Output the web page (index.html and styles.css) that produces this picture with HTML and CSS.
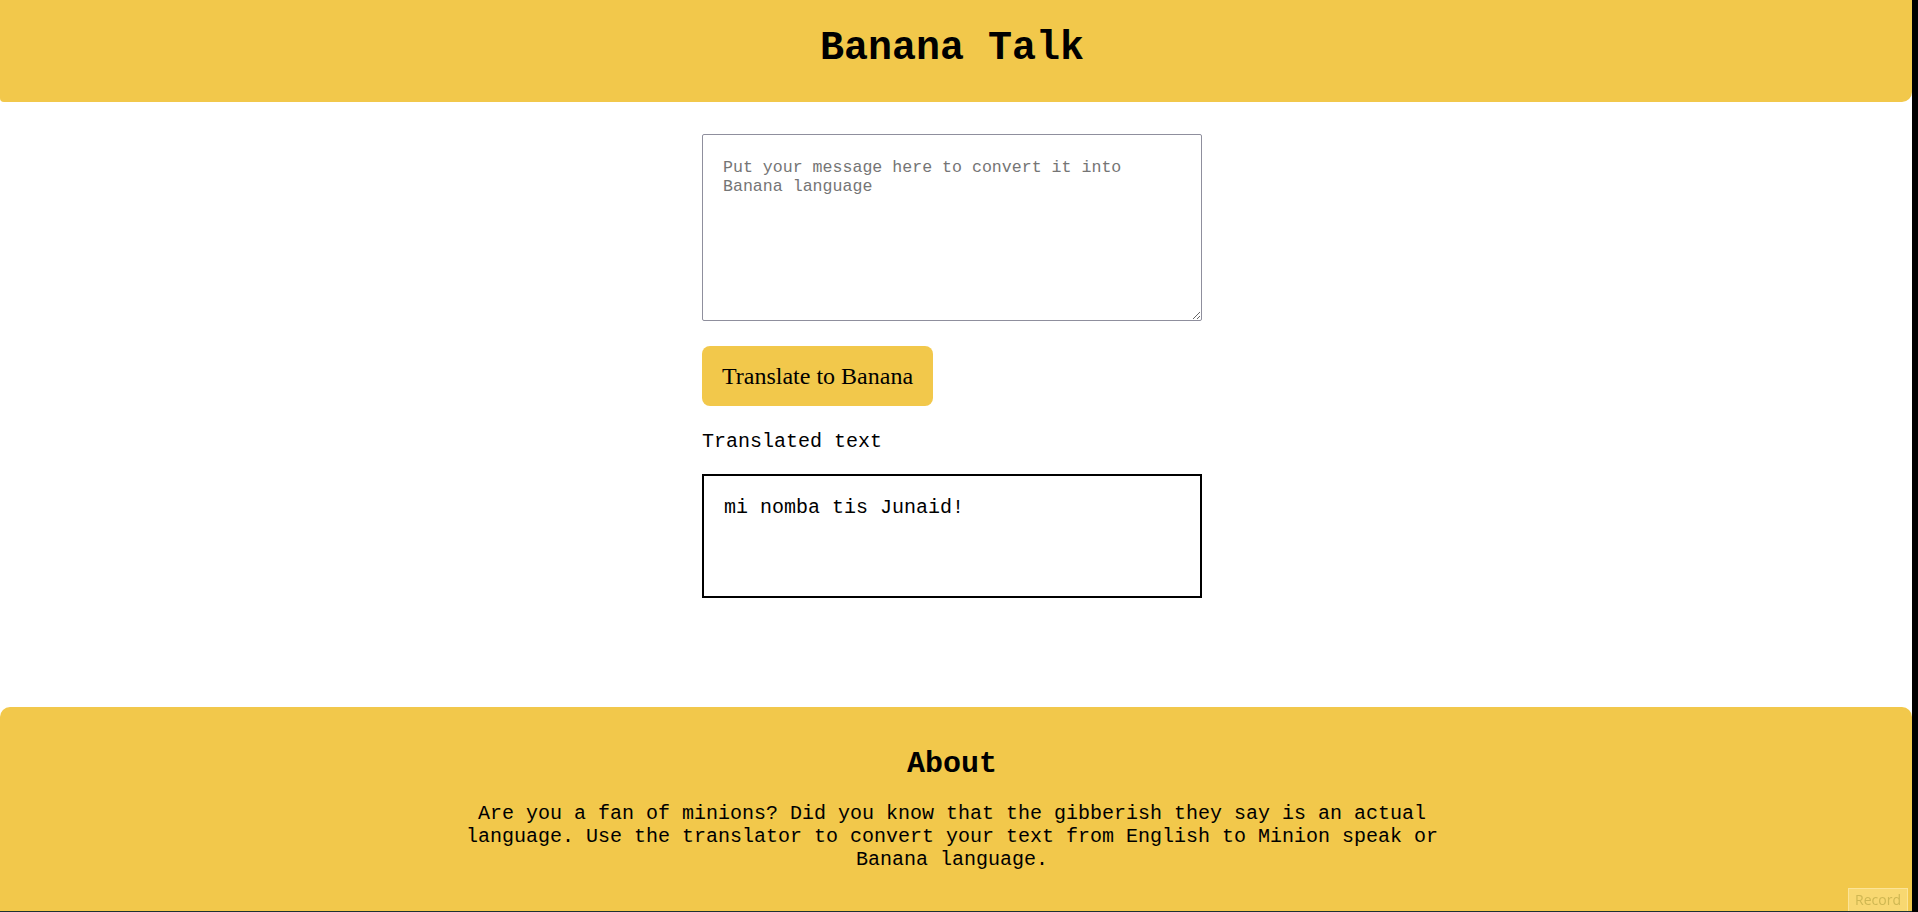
FILE: index.html
```html
<!DOCTYPE html>
<html lang="en">
<head>
<meta charset="utf-8">
<title>Banana Talk</title>
<link rel="stylesheet" href="styles.css">
</head>
<body>
<header class="site-header">
  <h1 class="site-title">Banana Talk</h1>
</header>
<main class="translator">
  <textarea class="input-text" placeholder="Put your message here to convert it into Banana language"></textarea>
  <button class="translate-btn" type="button">Translate to Banana</button>
  <div class="output-label">Translated text</div>
  <div class="output-box">mi nomba tis Junaid!</div>
</main>
<footer class="site-footer">
  <h2 class="about-title">About</h2>
  <p class="about-text">Are you a fan of minions? Did you know that the gibberish they say is an actual language. Use the translator to convert your text from English to Minion speak or Banana language.</p>
</footer>
<div class="record-badge">Record</div>
</body>
</html>
```
FILE: styles.css
```css
html {
  background: #000;
}

body {
  margin: 0 6px 0 0;
  background: #fff;
  min-height: 100vh;
  box-sizing: border-box;
  border-bottom: 1px solid #1c3232;
  display: flex;
  flex-direction: column;
  font-family: "Liberation Mono", "Courier New", monospace;
  color: #000;
}

.site-header {
  background: #f2c84b;
  padding: 26px 8px 30px 0;
  height: 102px;
  box-sizing: border-box;
  border-radius: 0 0 10px 4px;
  text-align: center;
}

.site-title {
  margin: 0;
  font-size: 40px;
  font-weight: bold;
  line-height: normal;
}

.translator {
  flex: 1;
  width: 500px;
  margin: 0 auto;
  padding: 32px 8px 0 0;
  display: flex;
  flex-direction: column;
  align-items: flex-start;
}

.input-text {
  width: 500px;
  height: 187px;
  box-sizing: border-box;
  margin: 0;
  padding: 23px 20px 20px;
  border: 1px solid #8f8f9d;
  border-radius: 2px;
  font-family: "Liberation Mono", "Courier New", monospace;
  font-size: 16.6px;
  line-height: 19px;
  color: #000;
  background: #fff;
}

.input-text::placeholder {
  color: #757575;
}

.translate-btn {
  margin-top: 25px;
  padding: 16px 20px;
  border: none;
  border-radius: 8px;
  background: #f2c84b;
  font-family: "Liberation Serif", "Times New Roman", serif;
  font-size: 24px;
  line-height: 28px;
  color: #000;
  cursor: pointer;
}

.output-label {
  margin-top: 24px;
  font-size: 20px;
  line-height: normal;
}

.output-box {
  margin-top: 21px;
  width: 500px;
  height: 124px;
  box-sizing: border-box;
  padding: 20px;
  border: 2px solid #000;
  font-size: 20px;
  line-height: normal;
}

.site-footer {
  background: #f2c84b;
  padding: 40px 8px 40px 0;
  border-radius: 10px 10px 0 0;
  text-align: center;
}

.about-title {
  margin: 0;
  font-size: 30px;
  font-weight: bold;
  line-height: normal;
}

.about-text {
  margin: 21px auto 0;
  max-width: 1000px;
  font-size: 20px;
  line-height: normal;
}

.record-badge {
  position: fixed;
  right: 10px;
  bottom: 1px;
  width: 60px;
  height: 23px;
  box-sizing: border-box;
  overflow: hidden;
  background: rgba(255, 235, 160, 0.45);
  border: 1px solid rgba(255, 240, 190, 0.5);
  border-bottom: none;
  color: rgba(190, 170, 70, 0.7);
  font-family: "Open Sans", "Noto Sans", sans-serif;
  font-size: 14px;
  line-height: 22px;
  text-align: center;
}
```
